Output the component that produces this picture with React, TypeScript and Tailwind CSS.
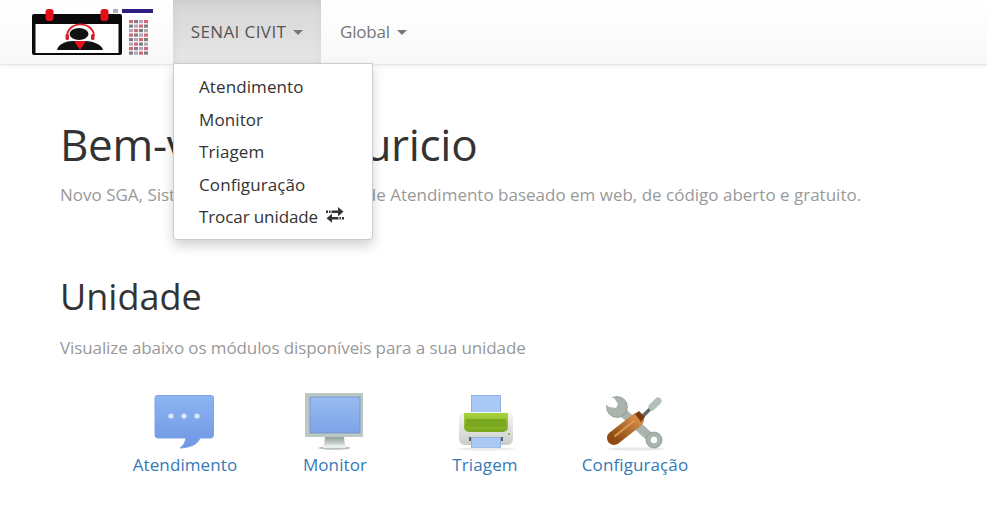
const font = "font-['Open_Sans','Noto_Sans',sans-serif]";

function Caret() {
  return <span className="ml-[7px] inline-block align-middle w-0 h-0 border-x-[5px] border-x-transparent border-t-[5px] border-t-[#777]" />;
}

function Logo() {
  const seats = [];
  for (let r = 0; r < 8; r++) {
    for (let c = 0; c < 4; c++) {
      seats.push(<rect key={r + "-" + c} x={100 + c * 5} y={17 + r * 4.5} width="4" height="3.2" fill={(r + c) % 3 === 0 ? "#c23a4a" : (r + c) % 3 === 1 ? "#555" : "#9a8aa0"} opacity="0.75" />);
    }
  }
  return (
    <svg width="130" height="56" viewBox="0 0 130 56" className="blur-[0.5px]">
      <rect x="3" y="11" width="90" height="41" rx="2" fill="#0a0a0a" />
      <rect x="6.500" y="21" width="83" height="29" fill="#fff" />
      <rect x="16.500" y="6" width="8" height="12" rx="3" fill="#e3101c" />
      <rect x="71.500" y="6" width="8" height="12" rx="3" fill="#e3101c" />
      <path d="M38 33a11 9.500 0 0 1 27 0" fill="none" stroke="#d81e26" strokeWidth="1.800" />
      <rect x="36.500" y="31" width="3.500" height="6" rx="1.600" fill="#d81e26" />
      <rect x="62" y="31" width="3.500" height="6" rx="1.600" fill="#d81e26" />
      <ellipse cx="50" cy="31" rx="9.500" ry="6" fill="#111" />
      <path d="M28 47c1-6 10-9 15-9h14c5 0 16 3 17 9z" fill="#111" />
      <path d="M45 38h12l-6 9z" fill="#e3101c" />
      <rect x="84" y="6" width="5" height="4" fill="#b9a6cf" />
      <rect x="93" y="6" width="31" height="4" fill="#2c1f80" />
      {seats}
    </svg>
  );
}

function ChatIcon() {
  return (
    <svg width="64" height="64" viewBox="0 0 64 64">
      <defs>
        <linearGradient id="chat" x1="0" y1="0" x2="0" y2="1">
          <stop offset="0" stopColor="#8db4f2" />
          <stop offset="1" stopColor="#6f97e4" />
        </linearGradient>
      </defs>
      <path d="M4 5.500h54a2.500 2.500 0 0 1 2.500 2.500v37a3 3 0 0 1-3 3H47c-2 6-9 9.500-20 10 3-2 5-5 6-10H5a3 3 0 0 1-3-3V8a2.500 2.500 0 0 1 2-2.500z" fill="url(#chat)" stroke="#7fa5e8" />
      <circle cx="18" cy="26" r="2.600" fill="#dbe7fb" />
      <circle cx="31" cy="26" r="2.600" fill="#dbe7fb" />
      <circle cx="44" cy="26" r="2.600" fill="#dbe7fb" />
    </svg>
  );
}

function MonitorIcon() {
  return (
    <svg width="64" height="64" viewBox="0 0 64 64">
      <defs>
        <linearGradient id="screen" x1="0" y1="0" x2="0" y2="1">
          <stop offset="0" stopColor="#98bcf2" />
          <stop offset="1" stopColor="#7ea3e6" />
        </linearGradient>
        <linearGradient id="stand" x1="0" y1="0" x2="0" y2="1">
          <stop offset="0" stopColor="#8f9f98" />
          <stop offset="1" stopColor="#dfe5e2" />
        </linearGradient>
      </defs>
      <rect x="2" y="3" width="58" height="44" fill="#bcc8c3" />
      <rect x="7" y="7" width="50" height="36" fill="url(#screen)" stroke="#6e8fc9" strokeWidth="0.800" />
      <path d="M22 47h19l1 9H21z" fill="url(#stand)" />
      <ellipse cx="31.500" cy="58" rx="16" ry="1.800" fill="#b9c3be" />
      <rect x="20" y="55" width="23" height="3" fill="#e9edeb" />
    </svg>
  );
}

function PrinterIcon() {
  return (
    <svg width="64" height="64" viewBox="0 0 64 64">
      <defs>
        <linearGradient id="body" x1="0" y1="0" x2="0" y2="1">
          <stop offset="0" stopColor="#f6f8f5" />
          <stop offset="1" stopColor="#c9cdc8" />
        </linearGradient>
        <linearGradient id="green" x1="0" y1="0" x2="0" y2="1">
          <stop offset="0" stopColor="#a9d340" />
          <stop offset="1" stopColor="#79a61e" />
        </linearGradient>
      </defs>
      <rect x="18.500" y="5.500" width="29" height="21" fill="#a9c8f3" stroke="#8fb1e6" />
      <rect x="6" y="22" width="54" height="33" rx="6" fill="url(#body)" />
      <path d="M11 23h44v14a5 5 0 0 1-5 5H16a5 5 0 0 1-5-5z" fill="url(#green)" />
      <rect x="13" y="29" width="40" height="8" rx="1" fill="#7aa81f" />
      <rect x="16" y="47" width="34" height="4" fill="#5b605a" />
      <rect x="18.500" y="47.500" width="29" height="10" fill="#a9c8f3" stroke="#8fb1e6" />
      <circle cx="56" cy="44" r="1" fill="#7fae22" />
      <ellipse cx="33" cy="59" rx="29" ry="1.500" fill="#ddd" opacity="0.6" />
    </svg>
  );
}

function ToolsIcon() {
  return (
    <svg width="64" height="64" viewBox="0 0 64 64">
      <defs>
        <linearGradient id="handle" x1="1" y1="0" x2="0" y2="1">
          <stop offset="0" stopColor="#d08a45" />
          <stop offset="1" stopColor="#8f4a12" />
        </linearGradient>
      </defs>
      <ellipse cx="33" cy="59" rx="29" ry="1.500" fill="#ddd" opacity="0.7" />
      <path d="M15 18 49 49" stroke="#aab4ad" strokeWidth="9" fill="none" />
      <circle cx="14" cy="17" r="10.500" fill="#aab4ad" stroke="#7c8781" strokeWidth="0.600" />
      <path d="M3 6 11 8l4 6-2 4-7-1-5-4z" fill="#fff" />
      <circle cx="51" cy="50" r="8" fill="#aab4ad" stroke="#7c8781" strokeWidth="0.600" />
      <circle cx="51" cy="50" r="3.200" fill="#fff" />
      <path d="M39 27 50 16" stroke="#5e6a64" strokeWidth="3.500" fill="none" />
      <path d="M49 17 55 11" stroke="#b5bfb8" strokeWidth="7" strokeLinecap="round" fill="none" />
      <path d="M34 30 11 48" stroke="url(#handle)" strokeWidth="14" strokeLinecap="round" fill="none" />
      <path d="M31 31 12 46" stroke="#dc9a58" strokeWidth="2" strokeLinecap="round" fill="none" />
      <path d="M32 24l4-3 6 6-4 5z" fill="#7a3c10" />
    </svg>
  );
}

function Module({ icon, label }: { icon: React.ReactNode; label: string }) {
  return (
    <a href="#" className="flex flex-col items-center w-[150px] text-[#337ab7] text-[17px] leading-[24px]">
      {icon}
      <span className="mt-[-1px] tracking-[0.1px]">{label}</span>
    </a>
  );
}

export default function App() {
  return (
    <div className={`relative w-[987px] h-[521px] overflow-hidden bg-white text-[#333] ${font}`}>
      <nav className="flex h-[65px] border-b border-[#e7e7e7] bg-gradient-to-b from-white to-[#f8f8f8] shadow-[0_1px_5px_rgba(0,0,0,0.07)]">
        <div className="w-[173px] pl-[29px] pt-[3px] shrink-0">
          <Logo />
        </div>
        <a href="#" className="flex items-center justify-center w-[148px] h-[64px] text-[17px] tracking-[0.4px] text-[#555] bg-gradient-to-b from-[#d6d6d6] to-[#e6e6e6] shadow-[inset_0_3px_9px_rgba(0,0,0,0.05)]">
          SENAI CIVIT<Caret />
        </a>
        <a href="#" className="flex items-center pl-[19px] h-[64px] text-[17px] tracking-[-0.2px] text-[#777]">
          Global<Caret />
        </a>
      </nav>

      <div className="absolute left-[173px] top-[63px] w-[200px] h-[177px] pt-[7px] rounded-b-[4px] border border-[#ccc] bg-white shadow-[0_6px_12px_rgba(0,0,0,0.175)] text-[17px] tracking-[0.1px] leading-[32.600px] text-[#333] z-10">
        <div className="pl-[25px]">Atendimento</div>
        <div className="pl-[25px]">Monitor</div>
        <div className="pl-[25px]">Triagem</div>
        <div className="pl-[25px]">Configuração</div>
        <div className="pl-[25px] flex items-center tracking-[-0.1px]">
          Trocar unidade
          <svg width="18" height="16" viewBox="0 0 18 16" className="ml-[8px] mt-[-5px]">
            <path d="M0 3.500h2v2.500H0zM3 3.500h1.500v2.500H3zM5.500 3.500H12V0l5.500 4.700L12 9.200V6H5.500z" fill="#333" />
            <path d="M18 10h-2v2.500h2zM15 10h-1.500v2.500H15zM12.500 10H6V6.800L.5 11.300 6 15.800v-3.300h6.500z" fill="#333" />
          </svg>
        </div>
      </div>

      <main className="pl-[60px]">
        <h1 className="mt-[49px] text-[44px] leading-[60px] tracking-[-0.3px] text-[#333]">Bem-vindo, Mauricio</h1>
        <p className="mt-[9px] text-[17px] leading-[24px] text-[#999]">
          Novo SGA, Sistema de Gerenciamento de Atendimento baseado em web, de código aberto e gratuito.
        </p>
        <h2 className="mt-[65px] text-[36px] leading-[50px] text-[#333]">Unidade</h2>
        <p className="mt-[14px] text-[17px] leading-[24px] tracking-[-0.1px] text-[#999]">
          Visualize abaixo os módulos disponíveis para a sua unidade
        </p>
        <div className="flex ml-[50px] mt-[30px]">
          <Module icon={<ChatIcon />} label="Atendimento" />
          <Module icon={<MonitorIcon />} label="Monitor" />
          <Module icon={<PrinterIcon />} label="Triagem" />
          <Module icon={<ToolsIcon />} label="Configuração" />
        </div>
      </main>
    </div>
  );
}
